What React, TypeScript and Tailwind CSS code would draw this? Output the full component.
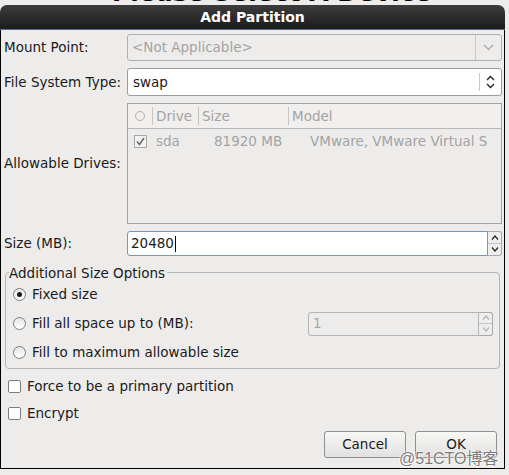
import React from 'react';

const font = { fontFamily: '"DejaVu Sans", Verdana, sans-serif' };

function ChevronDown({ color = '#8a8a8a' }: { color?: string }) {
  return (
    <svg width="11" height="7" viewBox="0 0 11 7">
      <path d="M1 1 L5.5 5.5 L10 1" fill="none" stroke={color} strokeWidth="1.2" />
    </svg>
  );
}

function UpDown() {
  return (
    <svg width="9" height="14" viewBox="0 0 9 14">
      <path d="M1 5 L4.5 1.5 L8 5" fill="none" stroke="#222" strokeWidth="1.3" />
      <path d="M1 9 L4.5 12.5 L8 9" fill="none" stroke="#222" strokeWidth="1.3" />
    </svg>
  );
}

function SpinButtons({ disabled }: { disabled?: boolean }) {
  const c = disabled ? '#b4b4b4' : '#222';
  return (
    <div className="flex w-[14px] flex-col rounded-r-[3px] border border-l-0 border-[#a9a9a9] bg-[#efeeec]">
      <div className="flex flex-1 items-center justify-center border-b border-[#c4c4c4]">
        <svg width="8" height="5" viewBox="0 0 8 5">
          <path d="M1 4.5 L4 1 L7 4.5" fill="none" stroke={c} strokeWidth="1.2" />
        </svg>
      </div>
      <div className="flex flex-1 items-center justify-center">
        <svg width="8" height="5" viewBox="0 0 8 5">
          <path d="M1 0.5 L4 4 L7 0.5" fill="none" stroke={c} strokeWidth="1.2" />
        </svg>
      </div>
    </div>
  );
}

function Radio({ checked, label }: { checked?: boolean; label: string }) {
  return (
    <div className="flex h-[29px] items-center">
      <div className="ml-[7px] flex h-[13px] w-[13px] items-center justify-center rounded-full border border-[#7d7d7d] bg-gradient-to-b from-[#e6e6e6] to-white">
        {checked ? <div className="h-[5px] w-[5px] rounded-full bg-[#1b1b1b]" /> : null}
      </div>
      <span className="ml-[6px]">{label}</span>
    </div>
  );
}

function Check({ label }: { label: string }) {
  return (
    <div className="flex h-[27px] items-center">
      <div className="ml-[7px] h-[13px] w-[13px] rounded-[2px] border border-[#7d7d7d] bg-white" />
      <span className="ml-[6px]">{label}</span>
    </div>
  );
}

export default function App() {
  return (
    <div className="relative h-[475px] w-[509px] overflow-hidden bg-[#edecea] text-[13.5px] text-[#1a1a1a]" style={font}>
      <div className="h-[5px] overflow-hidden">
        <div className="-mt-[20px] pl-[112px] text-[25px] font-bold leading-[25px] text-black">Please Select A Device</div>
      </div>

      <div className="w-[505px]">
        <div className="flex h-[25px] items-center justify-center rounded-t-[7px] border-b border-[#5d6d85] bg-gradient-to-b from-[#3d3d3d] to-[#1c1c1c] text-[14px] font-bold text-white">
          Add Partition
        </div>

        <div className="border-x border-b border-black bg-[#edeceb] pb-[10px]">
          <div className="grid grid-cols-[126px_375px] items-center pt-[4px]">
            <span className="pl-[3px]">Mount Point:</span>
            <div className="flex h-[27px] items-stretch rounded-[3px] border border-[#b0b0b0] bg-[#edeceb]">
              <span className="flex flex-1 items-center pl-[4px] text-[#a3a3a3]">&lt;Not Applicable&gt;</span>
              <div className="flex w-[26px] items-center justify-center border-l border-[#c8c8c8]">
                <ChevronDown color="#a5a5a5" />
              </div>
            </div>

            <span className="mt-[7px] pl-[3px]">File System Type:</span>
            <div className="mt-[7px] flex h-[28px] items-stretch rounded-[3px] border border-[#9c9c9c] bg-white">
              <span className="flex flex-1 items-center pl-[5px]">swap</span>
              <div className="my-[4px] w-px bg-[#c8c8c8]" />
              <div className="flex w-[21px] items-center justify-center">
                <UpDown />
              </div>
            </div>

            <span className="mt-[7px] pl-[3px]">Allowable Drives:</span>
            <div className="mt-[7px] h-[121px] border border-[#a3a3a3] bg-[#edeceb] text-[#a3a3a3]">
              <div className="flex h-[25px] items-center border-b border-[#b8b8b8] bg-[#f0efed]">
                <div className="flex w-[24px] justify-center">
                  <div className="h-[10px] w-[10px] rounded-full border border-[#b0b0b0]" />
                </div>
                <div className="h-[18px] w-px bg-[#c4c4c4]" />
                <span className="w-[45px] pl-[3px]">Drive</span>
                <div className="h-[18px] w-px bg-[#c4c4c4]" />
                <span className="w-[89px] pl-[3px]">Size</span>
                <div className="h-[18px] w-px bg-[#c4c4c4]" />
                <span className="pl-[3px]">Model</span>
              </div>
              <div className="flex h-[25px] items-center">
                <div className="ml-[6px] flex h-[13px] w-[13px] items-center justify-center border border-[#a8a8a8] bg-[#f2f2f2]">
                  <svg width="9" height="9" viewBox="0 0 9 9">
                    <path d="M1 4.5 L3.5 7.5 L8 1" fill="none" stroke="#6a6a6a" strokeWidth="1.5" />
                  </svg>
                </div>
                <span className="ml-[9px] w-[58px]">sda</span>
                <span className="w-[96px]">81920 MB</span>
                <span className="whitespace-nowrap">VMware, VMware Virtual S</span>
              </div>
            </div>

            <span className="mt-[7px] pl-[3px]">Size (MB):</span>
            <div className="mt-[7px] flex h-[25px]">
              <div className="flex flex-1 items-center rounded-l-[3px] border border-[#6f95c9] bg-white pl-[3px]">
                20480<span className="ml-px h-[16px] w-px bg-black" />
              </div>
              <SpinButtons />
            </div>
          </div>

          <div className="relative mx-[4px] mt-[16px] h-[97px] rounded-[4px] border border-[#b4b4b4]">
            <span className="absolute -top-[10px] left-[3px] bg-[#edeceb] pr-[2px]">Additional Size Options</span>
            <div className="pt-[7px]">
              <Radio checked label="Fixed size" />
              <div className="flex items-center justify-between pr-[6px]">
                <Radio label="Fill all space up to (MB):" />
                <div className="flex h-[24px] w-[185px]">
                  <div className="flex flex-1 items-center rounded-l-[3px] border border-[#b4b4b4] bg-[#edeceb] pl-[4px] text-[#a8a8a8]">1</div>
                  <SpinButtons disabled />
                </div>
              </div>
              <Radio label="Fill to maximum allowable size" />
            </div>
          </div>

          <div className="mt-[4px]">
            <Check label="Force to be a primary partition" />
            <Check label="Encrypt" />
          </div>

          <div className="mt-[4px] flex justify-end gap-[9px] pr-[7px]">
            <button className="h-[27px] w-[82px] rounded-[3px] border border-[#8f8f8f] bg-gradient-to-b from-[#f7f7f6] to-[#e2e1df]">Cancel</button>
            <button className="h-[27px] w-[82px] rounded-[3px] border border-[#8f8f8f] bg-gradient-to-b from-[#f7f7f6] to-[#e2e1df]">OK</button>
          </div>
        </div>
      </div>

      <span
        className="absolute left-[399px] top-[447px] text-[16px] text-[#7a7a7a]"
        style={{ fontFamily: '"Liberation Sans", "Noto Sans CJK SC", sans-serif', textShadow: '0 0 2px #fff, 0 0 2px #fff, 0 0 1px #fff' }}
      >
        @51CTO博客
      </span>
    </div>
  );
}
